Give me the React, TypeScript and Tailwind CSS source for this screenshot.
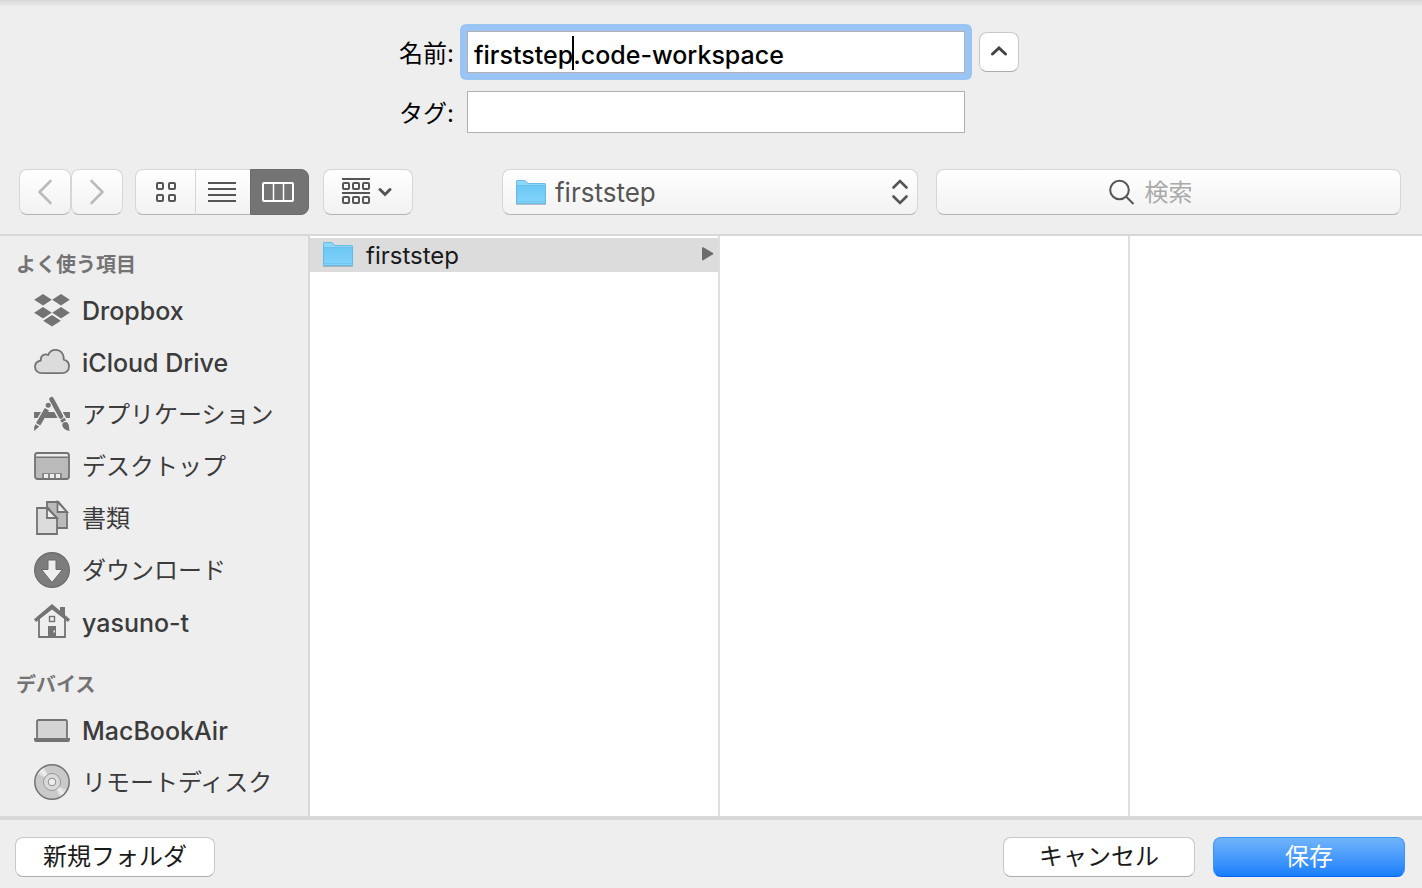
import { useState } from "react";
import type { ReactNode } from "react";

const fontStack = "font-['Inter','Noto_Sans_CJK_JP',sans-serif]";

const toolButton =
  "border border-[#d6d6d6] border-b-[#b4b4b4] bg-linear-to-b from-white to-[#f2f2f2] text-[#555]";

const pushButton =
  "h-10 rounded-lg border border-[#c8c8c8] border-b-[#acacac] bg-white text-2xl text-[#1a1a1a]";

function FolderIcon() {
  return (
    <svg width="32" height="26" viewBox="0 0 32 26" aria-hidden="true">
      <defs>
        <linearGradient id="folder" x1="0" y1="0" x2="0" y2="1">
          <stop offset="0" stopColor="#6bc8f5" />
          <stop offset="1" stopColor="#83d3f9" />
        </linearGradient>
      </defs>
      <path d="M1 24V1.500Q1 0 2.500 0H9q1 0 1.800.9l1.400 1.500q.6.6 1.600.6H29.500Q31 3 31 4.500V24z" fill="#8ed7f8" />
      <path d="M1 5h30v18.500H1z" fill="url(#folder)" />
      <path d="M1.500 23.500V1.500Q1.500.5 2.500.5H9q1 0 1.800.9l1.400 1.500q.6.6 1.600.6H29.500Q30.500 3.500 30.500 4.500V23.500z" fill="none" stroke="#5fb4df" strokeOpacity=".8" />
      <path d="M1.500 5.500h29M1.500 21.500h29" stroke="#62b9e4" strokeOpacity=".5" />
      <path d="M1 24.500h30" stroke="#8a9aa3" strokeOpacity=".6" />
    </svg>
  );
}

function DropboxIcon() {
  return (
    <svg width="36" height="36" viewBox="0 0 36 36" fill="#737373" aria-hidden="true">
      <path d="M9 2l8.800 5.700L9 13.400.2 7.700zM27 2l8.800 5.700L27 13.400l-8.800-5.700zM9 15l8.800 5.700L9 26.400.2 20.700zM27 15l8.800 5.700-8.800 5.700-8.800-5.700zM18 23l8.800 5.700-8.800 5.700-8.800-5.700z" />
      <path d="M8.500 28.500V27L18 21l9.500 6v1.500L18 22.300z" fill="#eee" />
    </svg>
  );
}

function CloudIcon() {
  return (
    <svg width="36" height="36" viewBox="0 0 36 36" aria-hidden="true">
      <path
        d="M8 29.200C4 29.200 1 26.500 1 22.800c0-3.200 2.200-5.600 5.800-6.300C6.300 12 10.500 9 14.200 11 15.500 7.500 18.200 5.800 21.500 5.800c5 0 8.700 4 8.200 9.900 3.300.8 5.300 3.500 5.300 6.700 0 4-3 6.800-7 6.800z"
        fill="#dcdcdc"
        stroke="#737373"
        strokeWidth="1.800"
        strokeLinejoin="round"
      />
    </svg>
  );
}

function ApplicationsIcon() {
  return (
    <svg width="36" height="36" viewBox="0 0 36 36" aria-hidden="true">
      <path d="M0 16h7L3.500 22H0zM13.800 16h6.400l3.400 6H10.300zM28.800 16H36v6h-3.800z" fill="#737373" />
      {/* pencil */}
      <circle cx="14.200" cy="9.300" r="2.500" fill="#737373" />
      <path d="M10.800 12l4.200 2.500L6.300 29.600 2.100 27.100z" fill="#737373" />
      <path d="M1.400 28.200l3.800 2.200L.2 35V31z" fill="#737373" />
      {/* brush */}
      <path d="M17.500 3.200L27 20.500" stroke="#737373" strokeWidth="4.600" strokeLinecap="round" />
      <path d="M26.200 24.200l4.300-2.500 1.500 2.600-4.300 2.500z" fill="#737373" />
      <path d="M28.300 28.200c.8-2 3.700-3 5.400-1.300 1.700 2 1.300 4.600 1.800 8.100-3.200-.6-7.500-2.700-7.200-6.800z" fill="#737373" />
    </svg>
  );
}

function DesktopIcon() {
  return (
    <svg width="36" height="36" viewBox="0 0 36 36" aria-hidden="true">
      <rect x="1" y="5" width="34" height="26" rx="2.500" fill="#bababa" />
      <path d="M2 6h32v3H2z" fill="#eee" />
      <path d="M1 9.200h34" stroke="#737373" strokeWidth="1.600" />
      <rect x="1" y="5" width="34" height="26" rx="2.500" fill="none" stroke="#737373" strokeWidth="1.800" />
      <path d="M8 25h20v5H8z" fill="#888" />
      <path d="M10 26h4v4h-4zM16 26h4v4h-4zM22 26h4v4h-4z" fill="#eee" />
    </svg>
  );
}

function DocumentsIcon() {
  return (
    <svg width="36" height="36" viewBox="0 0 36 36" stroke="#737373" strokeWidth="1.800" aria-hidden="true">
      <path d="M13 2h11.500L33 12v16H13z" fill="#bababa" />
      <path d="M23.500 2v10H33z" fill="#eee" />
      <path d="M3 8h11l9 10v16H3z" fill="#dcdcdc" />
      <path d="M13 8v10h10z" fill="#eee" />
    </svg>
  );
}

function DownloadsIcon() {
  return (
    <svg width="36" height="36" viewBox="0 0 36 36" aria-hidden="true">
      <circle cx="18" cy="18" r="17.300" fill="#7d7d7d" stroke="#6e6e6e" strokeWidth="1.400" />
      <path d="M14 8h8v9.500h6.500L18 30.500 7.500 17.500H14z" fill="#eee" stroke="#6a6a6a" strokeWidth="1" />
    </svg>
  );
}

function HomeIcon() {
  return (
    <svg width="36" height="36" viewBox="0 0 36 36" aria-hidden="true">
      <path d="M5 15v18h26V15" fill="none" stroke="#737373" strokeWidth="1.800" />
      <path d="M18 0l8 6.700V3h5v8l5 4.300-2 2.700L18 5.500 2 18 0 15.300z" fill="#737373" />
      <rect x="15.500" y="12.500" width="5" height="5" fill="none" stroke="#737373" strokeWidth="1.400" />
      <path d="M14 22h8v11h-8z" fill="#737373" />
      <path d="M19.500 26.500h1.500v2h-1.500z" fill="#eee" />
    </svg>
  );
}

function LaptopIcon() {
  return (
    <svg width="36" height="36" viewBox="0 0 36 36" aria-hidden="true">
      <rect x="3" y="8" width="30" height="20" rx="1.500" fill="#d4d4d4" stroke="#737373" strokeWidth="1.800" />
      <path d="M0 26h36v2q0 2-2 2H2q-2 0-2-2z" fill="#737373" />
    </svg>
  );
}

function DiscIcon() {
  return (
    <svg width="36" height="36" viewBox="0 0 36 36" aria-hidden="true">
      <circle cx="18" cy="18" r="17.200" fill="#c9c9c9" />
      <path d="M18 18L3.500 9.500A17 17 0 0 1 10 3.200zM18 18l8 14.800a17 17 0 0 0 6.500-6.300z" fill="#e0e0e0" />
      <path d="M18 18L5.500 7.500A17 17 0 0 1 8.500 4.500zM18 18l10 13.500a17 17 0 0 0 2.500-2.500z" fill="#eee" />
      <circle cx="18" cy="18" r="17.200" fill="none" stroke="#737373" strokeWidth="1.500" />
      <circle cx="18" cy="18" r="8.500" fill="#dadada" stroke="#999" />
      <circle cx="18" cy="18" r="3.800" fill="#eee" stroke="#8a8a8a" />
    </svg>
  );
}

type Item = { label: string; icon: ReactNode; latin?: boolean };

const favorites: Item[] = [
  { label: "Dropbox", icon: <DropboxIcon />, latin: true },
  { label: "iCloud Drive", icon: <CloudIcon />, latin: true },
  { label: "アプリケーション", icon: <ApplicationsIcon /> },
  { label: "デスクトップ", icon: <DesktopIcon /> },
  { label: "書類", icon: <DocumentsIcon /> },
  { label: "ダウンロード", icon: <DownloadsIcon /> },
  { label: "yasuno-t", icon: <HomeIcon />, latin: true },
];

const devices: Item[] = [
  { label: "MacBookAir", icon: <LaptopIcon />, latin: true },
  { label: "リモートディスク", icon: <DiscIcon /> },
];

function SidebarSection({ title, items }: { title: string; items: Item[] }) {
  return (
    <section>
      <h2 className="flex h-10 items-center pt-[2px] pl-4 text-[20px] font-bold text-[#737373]">{title}</h2>
      <ul>
        {items.map((item) => (
          <li key={item.label}>
            <button className="flex h-13 w-full items-center gap-3 pl-[34px] text-[#3b3b3b]">
              {item.icon}
              <span className={`pt-[2px] ${item.latin ? "text-[25px] font-medium" : "text-2xl"}`}>{item.label}</span>
            </button>
          </li>
        ))}
      </ul>
    </section>
  );
}

export default function App() {
  const [name, setName] = useState("firststep.code-workspace");
  const [tags, setTags] = useState("");

  return (
    <div className={`flex min-h-screen flex-col bg-[#eee] leading-none text-black ${fontStack}`}>
      <div className="h-[6px] bg-linear-to-b from-[#d8d8d8] to-[#eaeaea]" />

      <form className="grid grid-cols-[56px_498px_40px] justify-center gap-x-3 gap-y-[18px] pt-[25px] pr-[6px]">
        <label htmlFor="name" className="self-center pt-[3px] text-2xl whitespace-nowrap">
          名前:
        </label>
        <div className="relative -m-[7px] rounded-md bg-[#9ac4f3] p-[7px]">
          <input
            id="name"
            value={name}
            onChange={(e) => setName(e.target.value)}
            className="block h-[42px] w-full border border-[#b0b0b0] bg-white px-[6px] pt-[6px] text-[25px] font-medium caret-transparent outline-none"
          />
          {/* text caret */}
          <span className="absolute top-3 left-28 h-[34px] w-[2px] bg-black" />
        </div>
        <button
          type="button"
          aria-label="詳細を隠す"
          className="ml-[2px] flex h-10 w-10 items-center justify-center self-center rounded-lg border border-[#c8c8c8] border-b-[#acacac] bg-white"
        >
          <svg width="18" height="12" viewBox="0 0 18 12" fill="none" stroke="#444" strokeWidth="3" strokeLinecap="round">
            <path d="M2.500 8L9 2l6.500 6" />
          </svg>
        </button>

        <label htmlFor="tags" className="self-center pt-[3px] text-2xl whitespace-nowrap">
          タグ:
        </label>
        <input
          id="tags"
          value={tags}
          onChange={(e) => setTags(e.target.value)}
          className="h-[42px] border border-[#b0b0b0] bg-white px-[6px] text-[25px] font-medium outline-none"
        />
      </form>

      <div className="mt-9 mb-[19px] flex h-[46px] pr-[21px] pl-[19px]">
        <button aria-label="戻る" className={`flex w-13 items-center justify-center rounded-lg ${toolButton}`}>
          <svg width="16" height="26" viewBox="0 0 16 26" fill="none" stroke="#bbb" strokeWidth="2.600" strokeLinecap="round" strokeLinejoin="round">
            <path d="M13.500 2L2.500 13l11 11" />
          </svg>
        </button>
        <button aria-label="進む" className={`flex w-13 items-center justify-center rounded-lg ${toolButton}`}>
          <svg width="16" height="26" viewBox="0 0 16 26" fill="none" stroke="#bbb" strokeWidth="2.600" strokeLinecap="round" strokeLinejoin="round">
            <path d="M2.500 2l11 11-11 11" />
          </svg>
        </button>

        <div className="ml-3 flex">
          <button aria-label="アイコン" className={`flex w-[61px] items-center justify-center rounded-l-lg ${toolButton}`}>
            <svg width="20" height="20" viewBox="0 0 20 20" fill="none" stroke="#555" strokeWidth="2">
              <rect x="1" y="1" width="6" height="6" rx="1" />
              <rect x="13" y="1" width="6" height="6" rx="1" />
              <rect x="1" y="13" width="6" height="6" rx="1" />
              <rect x="13" y="13" width="6" height="6" rx="1" />
            </svg>
          </button>
          <button aria-label="リスト" className={`flex w-[54px] items-center border-x-0 pl-3 ${toolButton}`}>
            <svg width="28" height="20" viewBox="0 0 28 20" stroke="#555" strokeWidth="2">
              <path d="M0 1h28M0 7h28M0 13h28M0 19h28" />
            </svg>
          </button>
          <button
            aria-label="カラム"
            aria-pressed="true"
            className="flex w-[59px] items-center rounded-r-lg border border-[#6b6b6b] bg-[#747474] pl-[11px]"
          >
            <svg width="32" height="20" viewBox="0 0 32 20" fill="none" stroke="#fff" strokeWidth="2">
              <rect x="1" y="1" width="30" height="18" rx="1" />
              <path d="M11.500 1v18M21.500 1v18" strokeWidth="1.500" />
            </svg>
          </button>
        </div>

        <button
          aria-label="グループ分け"
          className={`ml-[14px] flex w-[90px] items-center gap-2 rounded-lg pl-[18px] ${toolButton}`}
        >
          <svg width="28" height="28" viewBox="0 0 28 28" fill="none" stroke="#555" strokeWidth="2">
            <path d="M0 1h28M0 15h28" />
            <rect x="1" y="5" width="6" height="6" rx="1" />
            <rect x="11" y="5" width="6" height="6" rx="1" />
            <rect x="21" y="5" width="6" height="6" rx="1" />
            <rect x="1" y="19" width="6" height="6" rx="1" />
            <rect x="11" y="19" width="6" height="6" rx="1" />
            <rect x="21" y="19" width="6" height="6" rx="1" />
          </svg>
          <svg width="14" height="10" viewBox="0 0 14 10" fill="none" stroke="#555" strokeWidth="3" strokeLinecap="round">
            <path d="M2 2.500l5 5 5-5" />
          </svg>
        </button>

        <div className="relative ml-[89px] w-[416px]">
          <select
            aria-label="場所"
            className={`h-full w-full appearance-none rounded-lg pt-[2px] pl-13 text-[26px] outline-none ${toolButton}`}
          >
            <option>firststep</option>
          </select>
          <span className="pointer-events-none absolute inset-y-0 left-[13px] flex items-center pt-[2px]">
            <FolderIcon />
          </span>
          <svg
            className="pointer-events-none absolute top-[10px] right-[10px]"
            width="16"
            height="26"
            viewBox="0 0 16 26"
            fill="none"
            stroke="#555"
            strokeWidth="2.600"
            strokeLinecap="round"
          >
            <path d="M1.500 8.500L8 2l6.500 6.500M1.500 17.500L8 24l6.500-6.500" />
          </svg>
        </div>

        <label className={`ml-[18px] flex flex-1 items-center justify-center gap-[10px] rounded-lg ${toolButton}`}>
          <svg width="26" height="26" viewBox="0 0 26 26" fill="none" stroke="#555" strokeWidth="2" aria-hidden="true">
            <circle cx="10.500" cy="11" r="9.300" />
            <path d="M17 17.500l7.500 7.500" />
          </svg>
          <input
            type="text"
            aria-label="検索"
            placeholder="検索"
            className="w-21 bg-transparent pt-[2px] text-2xl outline-none placeholder:text-[#aaa]"
          />
        </label>
      </div>

      <main className="flex flex-1 border-t-2 border-b-4 border-[#d8d8d8] bg-white">
        <aside className="flex w-[310px] shrink-0 flex-col gap-4 border-r-2 border-[#d8d8d8] bg-[#eee] py-2">
          <SidebarSection title="よく使う項目" items={favorites} />
          <SidebarSection title="デバイス" items={devices} />
        </aside>
        <div className="w-[410px] shrink-0 border-r-2 border-[#dedede] pt-[2px]">
          <button className="flex h-[34px] w-full items-center bg-[#dcdcdc] pr-1 pl-3 text-2xl text-[#1a1a1a]">
            <FolderIcon />
            <span className="ml-3 flex-1 pt-[2px] text-left">firststep</span>
            <svg width="13" height="16" viewBox="0 0 13 16" fill="#6b6b6b" aria-hidden="true">
              <path d="M1 1q0-1.200 1.200-.7L12 6q.8.700 0 1.300L2.200 13.300Q1 13.800 1 12.500z" />
            </svg>
          </button>
        </div>
        <div className="w-[410px] shrink-0 border-r-2 border-[#dedede]" />
        <div className="flex-1" />
      </main>

      <footer className="flex items-center gap-[18px] pt-[17px] pr-[17px] pb-[11px] pl-[15px]">
        <button className={`w-[200px] ${pushButton}`}>新規フォルダ</button>
        <button className={`ml-auto w-48 ${pushButton}`}>キャンセル</button>
        <button className="h-10 w-48 rounded-lg border border-[#3b94f7] border-b-[#0a63f5] bg-linear-to-b from-[#6fb4fa] to-[#157efb] text-2xl text-white">
          保存
        </button>
      </footer>
    </div>
  );
}
